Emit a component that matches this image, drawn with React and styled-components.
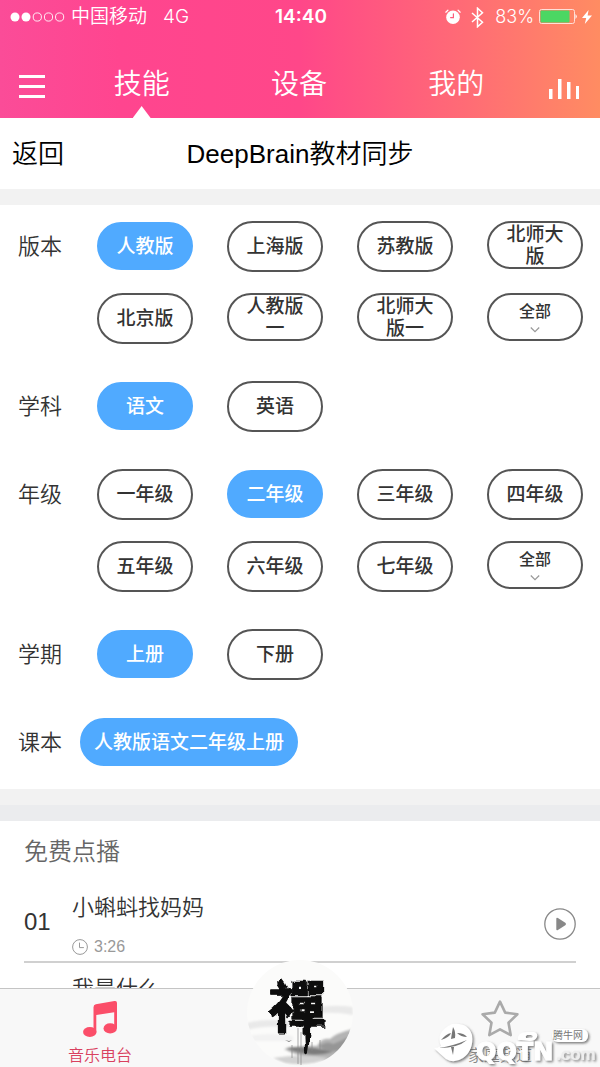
import React, { useState } from "react";
import styled, { createGlobalStyle, css } from "styled-components";

const GlobalStyle = createGlobalStyle`
  * { box-sizing: border-box; }
  body {
    margin: 0;
    background: #fff;
    color: #333;
    font-family: "Liberation Sans", "Noto Sans CJK SC", sans-serif;
  }
  button {
    margin: 0;
    padding: 0;
    border: 0;
    background: none;
    color: inherit;
    font: inherit;
    cursor: pointer;
  }
  svg { display: block; flex: none; }
`;

const Screen = styled.div`
  display: flex;
  flex-direction: column;
  height: 100vh;
`;

/* ---------- header ---------- */

const Header = styled.header`
  flex: none;
  color: #fff;
  background: linear-gradient(90deg, #fb4c98 0%, #ff458f 20%, #ff4789 50%, #ff6c75 78%, #ff8c62 100%);
`;

const StatusBar = styled.div`
  display: grid;
  grid-template-columns: 1fr auto 1fr;
  align-items: center;
  height: 34px;
  padding: 0 8px 0 10px;
  font-family: Inter, "Noto Sans CJK SC", sans-serif;
  font-size: 19px;
  line-height: 32px;
`;

const StatusGroup = styled.div`
  display: flex;
  align-items: center;
  gap: ${(p) => p.$gap}px;
  justify-content: ${(p) => (p.$end ? "flex-end" : "flex-start")};
  font-weight: 350;
`;

const Network = styled.span`
  margin-left: 10px;
`;

const Power = styled.div`
  display: flex;
  align-items: center;
  gap: 5px;
  font-size: 18px;
`;

const Clock = styled.time`
  font-weight: 600;
`;

const Nav = styled.nav`
  display: grid;
  grid-template-columns: 63px 1fr 1fr 1fr 65px;
  height: 84px;
`;

const NavTab = styled.button`
  display: flex;
  flex-direction: column;
  align-items: center;
  justify-content: space-between;
  padding-top: 30px;
  font-size: 28px;
  line-height: 42px;
  font-weight: 350;
`;

const Pointer = styled.span`
  width: 18px;
  height: 12px;
  background: #fff;
  clip-path: polygon(50% 0, 100% 100%, 0 100%);
`;

const IconButton = styled.button`
  display: flex;
  align-items: flex-end;
  justify-content: ${(p) => (p.$end ? "flex-end" : "flex-start")};
  padding: ${(p) => (p.$end ? "0 20px 19px 0" : "0 0 19px 19px")};
`;

/* ---------- title ---------- */

const TitleBar = styled.div`
  display: grid;
  grid-template-columns: 1fr auto 1fr;
  align-items: center;
  flex: none;
  height: 71px;
  padding: 0 12px;
  color: #000;
  font-size: 26px;
  line-height: 38px;
  font-weight: 350;
`;

const Back = styled.button`
  justify-self: start;
`;

const Title = styled.h1`
  margin: 0;
  font-size: 26px;
  font-weight: 350;
`;

const Body = styled.main`
  flex: 1;
  min-height: 0;
  overflow-y: auto;
  scrollbar-width: none;
`;

const Band = styled.div`
  height: 16px;
  background: ${(p) => (p.$dark ? "#ebecee" : "#f2f2f2")};
`;

/* ---------- filters ---------- */

const FilterRow = styled.section`
  display: flex;
  padding: 16px 17px 0 18px;
`;

const FilterLabel = styled.h2`
  flex: none;
  width: 62px;
  margin: 0;
  font-size: 22px;
  line-height: 52px;
  font-weight: 350;
`;

const Options = styled.div`
  flex: 1;
  display: grid;
  grid-template-columns: ${(p) => (p.$wide ? "auto" : "repeat(4, 96px)")};
  grid-auto-rows: 72px;
  justify-content: ${(p) => (p.$wide ? "start" : "space-between")};
  align-items: start;
  padding-left: ${(p) => (p.$wide ? 0 : 17)}px;
`;

const Chip = styled.button`
  display: flex;
  flex-direction: column;
  align-items: center;
  justify-content: center;
  height: 51px;
  padding: 0 12px;
  border: 2px solid #555;
  border-radius: 26px;
  font-size: 19px;
  line-height: 22px;
  font-weight: 500;

  ${(p) =>
    p.$compact &&
    css`
      height: 48px;
      padding-top: 2px;
    `}

  ${(p) =>
    p.$selected &&
    css`
      height: 48px;
      margin-top: 1px;
      padding-top: 2px;
      border-color: #50aaff;
      background: #50aaff;
      color: #fff;
    `}
`;

const MoreText = styled.span`
  margin-bottom: 4px;
  font-size: 16px;
  line-height: 20px;
`;

/* ---------- play list ---------- */

const ListPanel = styled.section`
  padding: 0 24px;
`;

const ListHeading = styled.h2`
  margin: 0;
  color: #666;
  font-size: 24px;
  line-height: 61px;
  font-weight: 350;
`;

const Tracks = styled.ol`
  margin: 0;
  padding: 0;
  list-style: none;
`;

const Track = styled.li`
  display: flex;
  align-items: center;
  height: 81px;
  border-bottom: 2px solid #d0d0d0;
`;

const TrackNumber = styled.span`
  width: 48px;
  font-size: 24px;
`;

const TrackInfo = styled.div`
  flex: 1;
  align-self: stretch;
  padding-top: 9px;
`;

const TrackName = styled.div`
  font-size: 22px;
  line-height: 34px;
  font-weight: 350;
`;

const Duration = styled.div`
  display: flex;
  align-items: center;
  gap: 6px;
  margin-top: 12px;
  color: #999;
  font-size: 16px;
  line-height: 20px;
`;

const PlayButton = styled.button`
  padding-top: 5px;
`;

/* ---------- bottom bar ---------- */

const TabBar = styled.footer`
  position: relative;
  flex: none;
  display: grid;
  grid-template-columns: 1fr 1fr 1fr;
  height: 79px;
  border-top: 1px solid #c4c4c4;
  background: #f8f8f8;
`;

const BottomTab = styled.button`
  display: flex;
  flex-direction: column;
  align-items: center;
  justify-content: flex-end;
  gap: 8px;
  color: ${(p) => (p.$active ? "#d9415f" : "#888")};
  font-size: 16px;
  line-height: 22px;
  font-weight: 350;
`;

const Disc = styled.button`
  position: absolute;
  left: 50%;
  bottom: 1px;
  width: 106px;
  height: 106px;
  transform: translateX(-50%);
  border-radius: 50%;
  overflow: hidden;
`;

const Watermark = styled.div`
  position: absolute;
  right: 0;
  bottom: 0;
  width: 168px;
  height: 48px;
  pointer-events: none;
`;

/* ---------- icons ---------- */

const SignalDots = () => (
  <svg width="55" height="12" viewBox="0 0 55 12" fill="none" stroke="#fff">
    <circle cx="5" cy="6" r="4.5" fill="#fff" stroke="none" />
    <circle cx="16" cy="6" r="4.5" fill="#fff" stroke="none" />
    <circle cx="27.3" cy="6" r="4.1" strokeWidth=".9" />
    <circle cx="38.5" cy="6" r="4.1" strokeWidth=".9" />
    <circle cx="49.6" cy="6" r="4.1" strokeWidth=".9" />
  </svg>
);

const AlarmIcon = () => (
  <svg width="20" height="16" viewBox="0 0 20 16" fill="none" strokeLinecap="round">
    <circle cx="8" cy="8.3" r="6.8" fill="#fff" />
    <path d="M8.4 4.8v3.800H5.600" stroke="#ff5c7c" strokeWidth="1.2" />
    <path d="M.8 3.200 2.900 1.200M15.200 3.200l-2.100-2" stroke="#fff" strokeWidth="1.2" />
  </svg>
);

const BluetoothIcon = () => (
  <svg width="18" height="21" viewBox="0 0 18 21" fill="none" stroke="#fff" strokeWidth="1.5">
    <path d="m1 6 10.5 9.3-5 4.5V1.2l5 4.5L1 15" />
  </svg>
);

const BatteryIcon = () => (
  <svg width="38" height="16" viewBox="0 0 38 16">
    <rect x=".5" y=".5" width="35" height="14" rx="2" fill="none" stroke="#ffe0d8" />
    <rect x="1.5" y="1.5" width="29" height="12" rx="1" fill="#4bd763" />
    <path d="M36.500 5q2.500 2.500 0 5z" fill="#fff" />
  </svg>
);

const BoltIcon = () => (
  <svg width="10" height="14" viewBox="0 0 10 14">
    <path d="M6.6 0 0 8h4.2L2.8 14 10 5.6H5.6z" fill="#fff" />
  </svg>
);

const MenuIcon = () => (
  <svg width="26" height="25" viewBox="0 0 26 25" fill="#fff">
    <path d="M0 1h26v3H0zM0 11h26v3H0zM0 21h26v3H0z" />
  </svg>
);

const BarsIcon = () => (
  <svg width="31" height="20" viewBox="0 0 31 20" fill="#fff">
    <path d="M0 10h3.500v10H0zM9 0h3.500v20H9zM18 3h3.500v17H18zM27 7h3v13h-3z" />
  </svg>
);

const ChevronIcon = () => (
  <svg width="10" height="8" viewBox="0 0 10 8" fill="none" stroke="#999" strokeWidth="1.2">
    <path d="m.8 1.5 4.2 4.2 4.2-4.2" />
  </svg>
);

const ClockIcon = () => (
  <svg width="16" height="16" viewBox="0 0 16 16" fill="none" stroke="#999">
    <circle cx="8" cy="8" r="7.4" />
    <path d="M7.5 3.6v5h4.4" />
  </svg>
);

const PlayIcon = () => (
  <svg width="32" height="32" viewBox="0 0 32 32">
    <circle cx="16" cy="16" r="15.2" fill="none" stroke="#888" strokeWidth="1.3" />
    <path d="M12.300 10.8v10.4q0 1.500 1.600.8l7.400-4.800q1.600-1.200 0-2.400L13.900 10q-1.600-.7-1.600.8z" fill="#888" />
  </svg>
);

const MusicIcon = () => (
  <svg width="34" height="36" viewBox="0 0 34 36" fill="#fb4e69">
    <path d="M10.5 6.2q0-2.4 2.300-2.900L31.5.1q2.500-.4 2.500 2v25.300h-2.800V11.200L13.300 14v17.600h-2.800z" />
    <ellipse cx="6.8" cy="31" rx="6.7" ry="4.9" />
    <ellipse cx="27.2" cy="27.4" rx="6.7" ry="5.1" />
  </svg>
);

const StarIcon = () => (
  <svg width="38" height="37" viewBox="0 0 38 37" fill="none" stroke="#aaa" strokeWidth="2.600" strokeLinejoin="round">
    <path d="m19 1.6 5.2 11 12.2 1.600-8.900 8.500 2.200 12.400L19 29.300 8.300 35.100l2.200-12.400-8.900-8.500 12.200-1.600z" />
  </svg>
);

const ZenDisc = () => (
  <svg width="106" height="106" viewBox="0 0 106 106">
    <defs>
      <filter id="wash" x="-20%" y="-40%" width="140%" height="180%">
        <feGaussianBlur stdDeviation="1.3" />
      </filter>
      <filter id="brush" x="-10%" y="-10%" width="120%" height="120%">
        <feTurbulence type="fractalNoise" baseFrequency=".09" numOctaves="2" seed="4" />
        <feDisplacementMap in="SourceGraphic" scale="6" xChannelSelector="R" yChannelSelector="G" />
      </filter>
    </defs>
    <rect width="106" height="106" fill="#fbfbfa" />
    <g filter="url(#wash)">
      <path d="M0 63q18-5 42-2v6q-24-2-42 3zM66 48q20-4 40-1v8q-20-4-40-1z" fill="#e9e9e9" />
      <path d="M0 76q24-4 46 0v5H0z" fill="#f2f2f2" />
      <path d="M37 89q20-4 33-3 5-9 13-7 6-6 23-10v25q-20 12-46 3-12-2-23-8z" fill="#b4b4b4" />
      <path d="M39 88q20-3 47 4-23 7-47-4z" fill="#7c7c7c" />
      <path d="M72 86q9-6 14-2 8-3 17-8v8q-17 14-31 2z" fill="#969696" />
      <path d="M26 98q30-5 56 0-20 9-44 5z" fill="#d2d2d2" />
    </g>
    <path d="M51 68v36M54 72v33M45 85v13M65 82v9M73 80v11" stroke="#888" strokeWidth=".7" />
    <path d="m38 80 4 1 3-1-3 2z" fill="#777" />
    <g filter="url(#brush)" fill="#080808">
      <path d="M57 62h7.500q-1 16-3.500 30-2 3-3-1z" />
      <text
        x="51"
        y="68"
        textAnchor="middle"
        fontFamily="'Noto Sans CJK SC', sans-serif"
        fontSize="57"
        fontWeight="700"
        stroke="#080808"
        strokeWidth="1.400"
        strokeLinejoin="round"
      >
        禪
      </text>
    </g>
  </svg>
);

const WatermarkArt = () => (
  <svg width="168" height="48" viewBox="0 0 168 48">
    <defs>
      <filter id="shade" x="-10%" y="-20%" width="125%" height="150%">
        <feDropShadow dx="1.5" dy="1.5" stdDeviation="1" floodColor="#555" floodOpacity=".75" />
      </filter>
    </defs>
    <g filter="url(#shade)" fill="#fff">
      <path d="M20 5q16-2 20 11 2 15-9 23-9 6-17 1Q7 34 2 29q4 0 7-2-6-14 11-22z" />
      <path d="M86 21q-1-8 9-8h7q4 1 3 5-2 4-7 4zm8-2h6q2-2-1-3h-4q-2 1-1 3z" fillRule="evenodd" />
      <rect x="120" y="10" width="36" height="13" rx="6" />
      <text x="44" y="41" fontFamily="'DejaVu Sans', sans-serif" fontWeight="700" fontSize="24" stroke="#fff">QQTN</text>
      <text x="124" y="41" fontFamily="'Liberation Sans', sans-serif" fontWeight="700" fontSize="17" fill="#eee">.com</text>
    </g>
    <g fill="#777">
      <path d="M21 8q3 5 2 11l-4 1q1-7 2-12zM9 21q5-6 10-7-1 4-10 7zM25 14q7 0 10 4-6 0-10-4zM7 29q14-2 28-8-9 8-28 8zM19 28h3l-1 8z" />
    </g>
    <text x="121" y="20" fontFamily="'Noto Sans CJK SC', sans-serif" fontSize="10" fill="#777">腾牛网</text>
  </svg>
);

/* ---------- data ---------- */

const filters = [
  {
    label: "版本",
    selected: "人教版",
    options: ["人教版", "上海版", "苏教版", "北师大版", "北京版", "人教版一", "北师大版一"],
    more: true,
  },
  { label: "学科", selected: "语文", options: ["语文", "英语"] },
  {
    label: "年级",
    selected: "二年级",
    options: ["一年级", "二年级", "三年级", "四年级", "五年级", "六年级", "七年级"],
    more: true,
  },
  { label: "学期", selected: "上册", options: ["上册", "下册"] },
  { label: "课本", selected: "人教版语文二年级上册", options: ["人教版语文二年级上册"], wide: true },
];

const tracks = [
  { number: "01", name: "小蝌蚪找妈妈", duration: "3:26" },
  { number: "02", name: "我是什么" },
];

function Filter({ label, selected, options, more, wide }) {
  const [current, setCurrent] = useState(selected);
  return (
    <FilterRow aria-label={label}>
      <FilterLabel>{label}</FilterLabel>
      <Options $wide={wide}>
        {options.map((name) => (
          <Chip
            key={name}
            type="button"
            $selected={name === current}
            $compact={!wide && name.length > 3}
            aria-pressed={name === current}
            onClick={() => setCurrent(name)}
          >
            {name}
          </Chip>
        ))}
        {more && (
          <Chip type="button" $compact>
            <MoreText>全部</MoreText>
            <ChevronIcon />
          </Chip>
        )}
      </Options>
    </FilterRow>
  );
}

export default function App() {
  return (
    <Screen>
      <GlobalStyle />
      <Header>
        <StatusBar>
          <StatusGroup $gap={6}>
            <SignalDots />
            <span>中国移动</span>
            <Network>4G</Network>
          </StatusGroup>
          <Clock>14:40</Clock>
          <StatusGroup $gap={6} $end>
            <AlarmIcon />
            <BluetoothIcon />
            <Power>
              83%
              <BatteryIcon />
              <BoltIcon />
            </Power>
          </StatusGroup>
        </StatusBar>
        <Nav>
          <IconButton type="button" aria-label="菜单">
            <MenuIcon />
          </IconButton>
          <NavTab type="button">
            技能
            <Pointer />
          </NavTab>
          <NavTab type="button">设备</NavTab>
          <NavTab type="button">我的</NavTab>
          <IconButton type="button" $end aria-label="播放">
            <BarsIcon />
          </IconButton>
        </Nav>
      </Header>
      <TitleBar>
        <Back type="button">返回</Back>
        <Title>DeepBrain教材同步</Title>
      </TitleBar>
      <Body>
        <Band />
        {filters.map((filter) => (
          <Filter key={filter.label} {...filter} />
        ))}
        <Band />
        <Band $dark />
        <ListPanel>
          <ListHeading>免费点播</ListHeading>
          <Tracks>
            {tracks.map((track) => (
              <Track key={track.number}>
                <TrackNumber>{track.number}</TrackNumber>
                <TrackInfo>
                  <TrackName>{track.name}</TrackName>
                  {track.duration && (
                    <Duration>
                      <ClockIcon />
                      {track.duration}
                    </Duration>
                  )}
                </TrackInfo>
                <PlayButton type="button" aria-label={`播放 ${track.name}`}>
                  <PlayIcon />
                </PlayButton>
              </Track>
            ))}
          </Tracks>
        </ListPanel>
      </Body>
      <TabBar>
        <BottomTab type="button" $active>
          <MusicIcon />
          音乐电台
        </BottomTab>
        <span />
        <BottomTab type="button">
          <StarIcon />
          家庭频道
        </BottomTab>
        <Disc type="button" aria-label="禪">
          <ZenDisc />
        </Disc>
        <Watermark>
          <WatermarkArt />
        </Watermark>
      </TabBar>
    </Screen>
  );
}
